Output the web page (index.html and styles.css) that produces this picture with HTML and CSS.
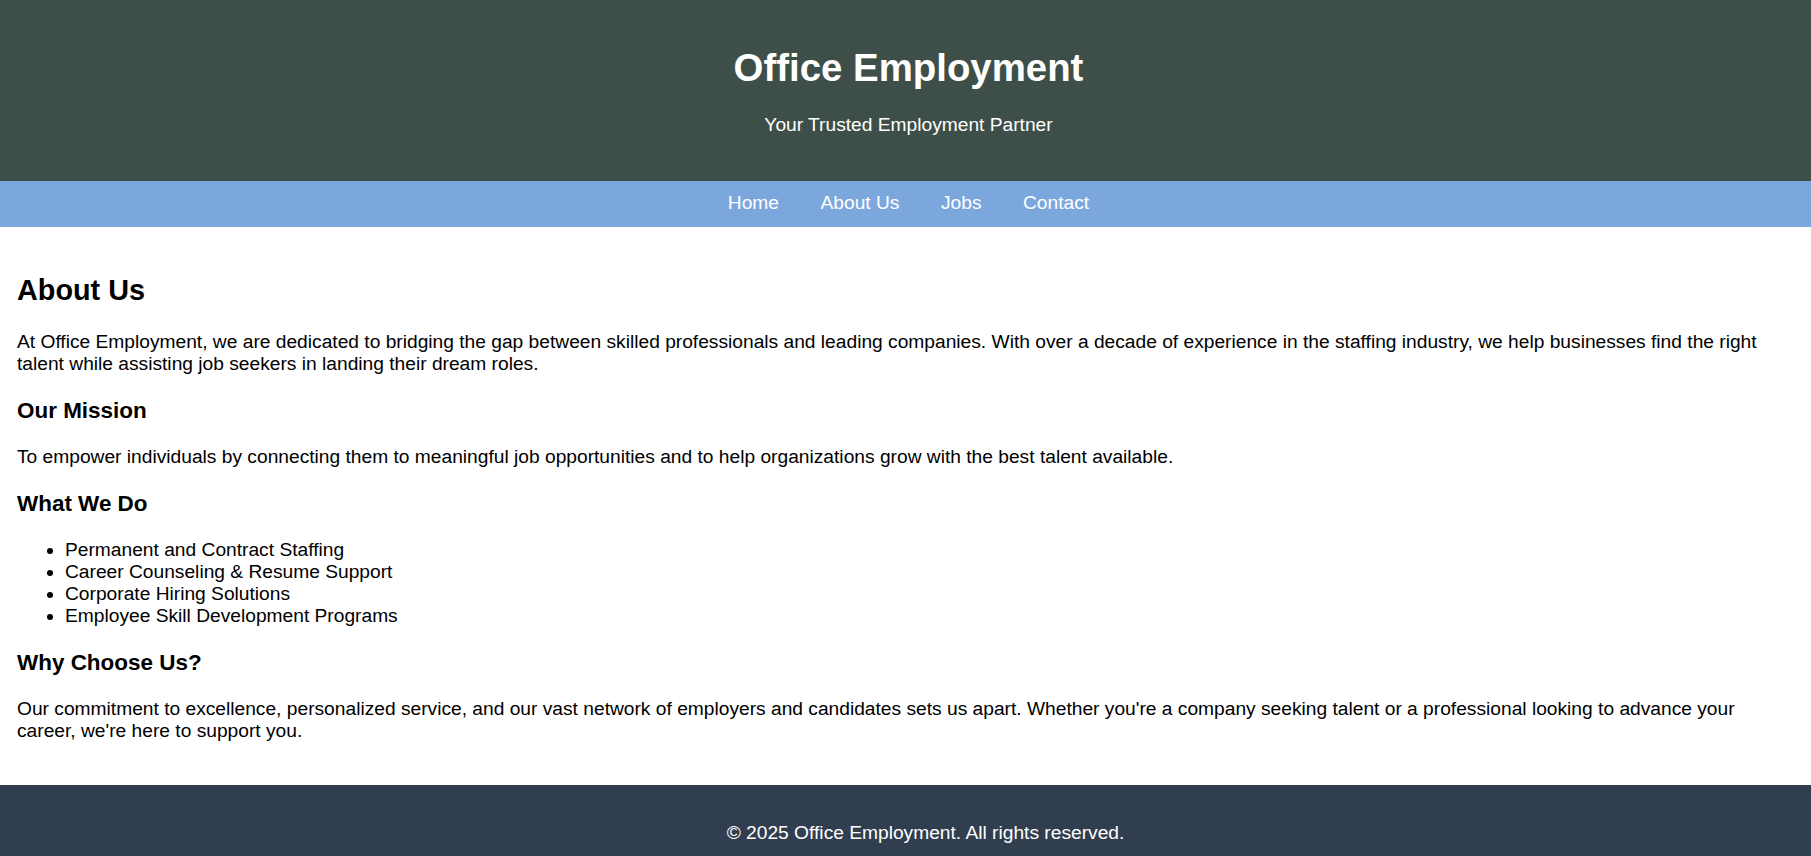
FILE: index.html
```html
<!DOCTYPE html>
<html lang="en">
<head>
<meta charset="utf-8">
<title>About Us - Office Employment</title>
<link rel="stylesheet" href="styles.css">
</head>
<body>
<header class="site-header">
  <h1 class="site-title">Office Employment</h1>
  <p class="site-tagline">Your Trusted Employment Partner</p>
</header>
<nav class="site-nav">
  <a href="#" class="nav-link">Home</a>
  <a href="#" class="nav-link">About Us</a>
  <a href="#" class="nav-link">Jobs</a>
  <a href="#" class="nav-link">Contact</a>
</nav>
<main class="content">
  <h2 class="page-title">About Us</h2>
  <p class="text">At Office Employment, we are dedicated to bridging the gap between skilled professionals and leading companies. With over a decade of experience in the staffing industry, we help businesses find the right talent while assisting job seekers in landing their dream roles.</p>
  <h3 class="section-title">Our Mission</h3>
  <p class="text">To empower individuals by connecting them to meaningful job opportunities and to help organizations grow with the best talent available.</p>
  <h3 class="section-title">What We Do</h3>
  <ul class="services">
    <li>Permanent and Contract Staffing</li>
    <li>Career Counseling &amp; Resume Support</li>
    <li>Corporate Hiring Solutions</li>
    <li>Employee Skill Development Programs</li>
  </ul>
  <h3 class="section-title">Why Choose Us?</h3>
  <p class="text">Our commitment to excellence, personalized service, and our vast network of employers and candidates sets us apart. Whether you're a company seeking talent or a professional looking to advance your career, we're here to support you.</p>
</main>
<footer class="site-footer">
  <p class="footer-text">&copy; 2025 Office Employment. All rights reserved.</p>
</footer>
</body>
</html>
```

FILE: styles.css
```css
html, body {
  margin: 0;
  padding: 0;
}

body {
  font-family: Arial, "Liberation Sans", Helvetica, sans-serif;
  font-size: 19.2px;
  color: #000;
  background: #fff;
}

.site-header {
  background: #3d4f48;
  color: #fff;
  text-align: center;
  padding: 20px 0 26px 6px;
}

.site-title {
  font-size: 38.4px;
  font-weight: bold;
  margin: 26px 0 0;
}

.site-tagline {
  font-size: 19.2px;
  margin: 23.5px 0 19px;
}

.site-nav {
  background: #7ca7dd;
  display: flex;
  justify-content: center;
  gap: 41.5px;
  padding: 11.5px 0 12.5px 6px;
}

.nav-link {
  color: #fff;
  text-decoration: none;
  font-size: 19.2px;
}

.content {
  padding: 24px 17px 24px;
}

.page-title {
  font-size: 28.8px;
  font-weight: bold;
  margin: 23.9px 0;
}

.section-title {
  font-size: 22.46px;
  font-weight: bold;
  margin: 22.46px 0;
}

.text {
  margin: 19.2px 0;
}

.services {
  margin: 19.2px 0;
  padding-left: 48px;
}

.site-footer {
  background: #313e4f;
  color: #fff;
  text-align: center;
  padding: 18px 0 18px 40px;
}

.footer-text {
  margin: 19.2px 0;
}
```
